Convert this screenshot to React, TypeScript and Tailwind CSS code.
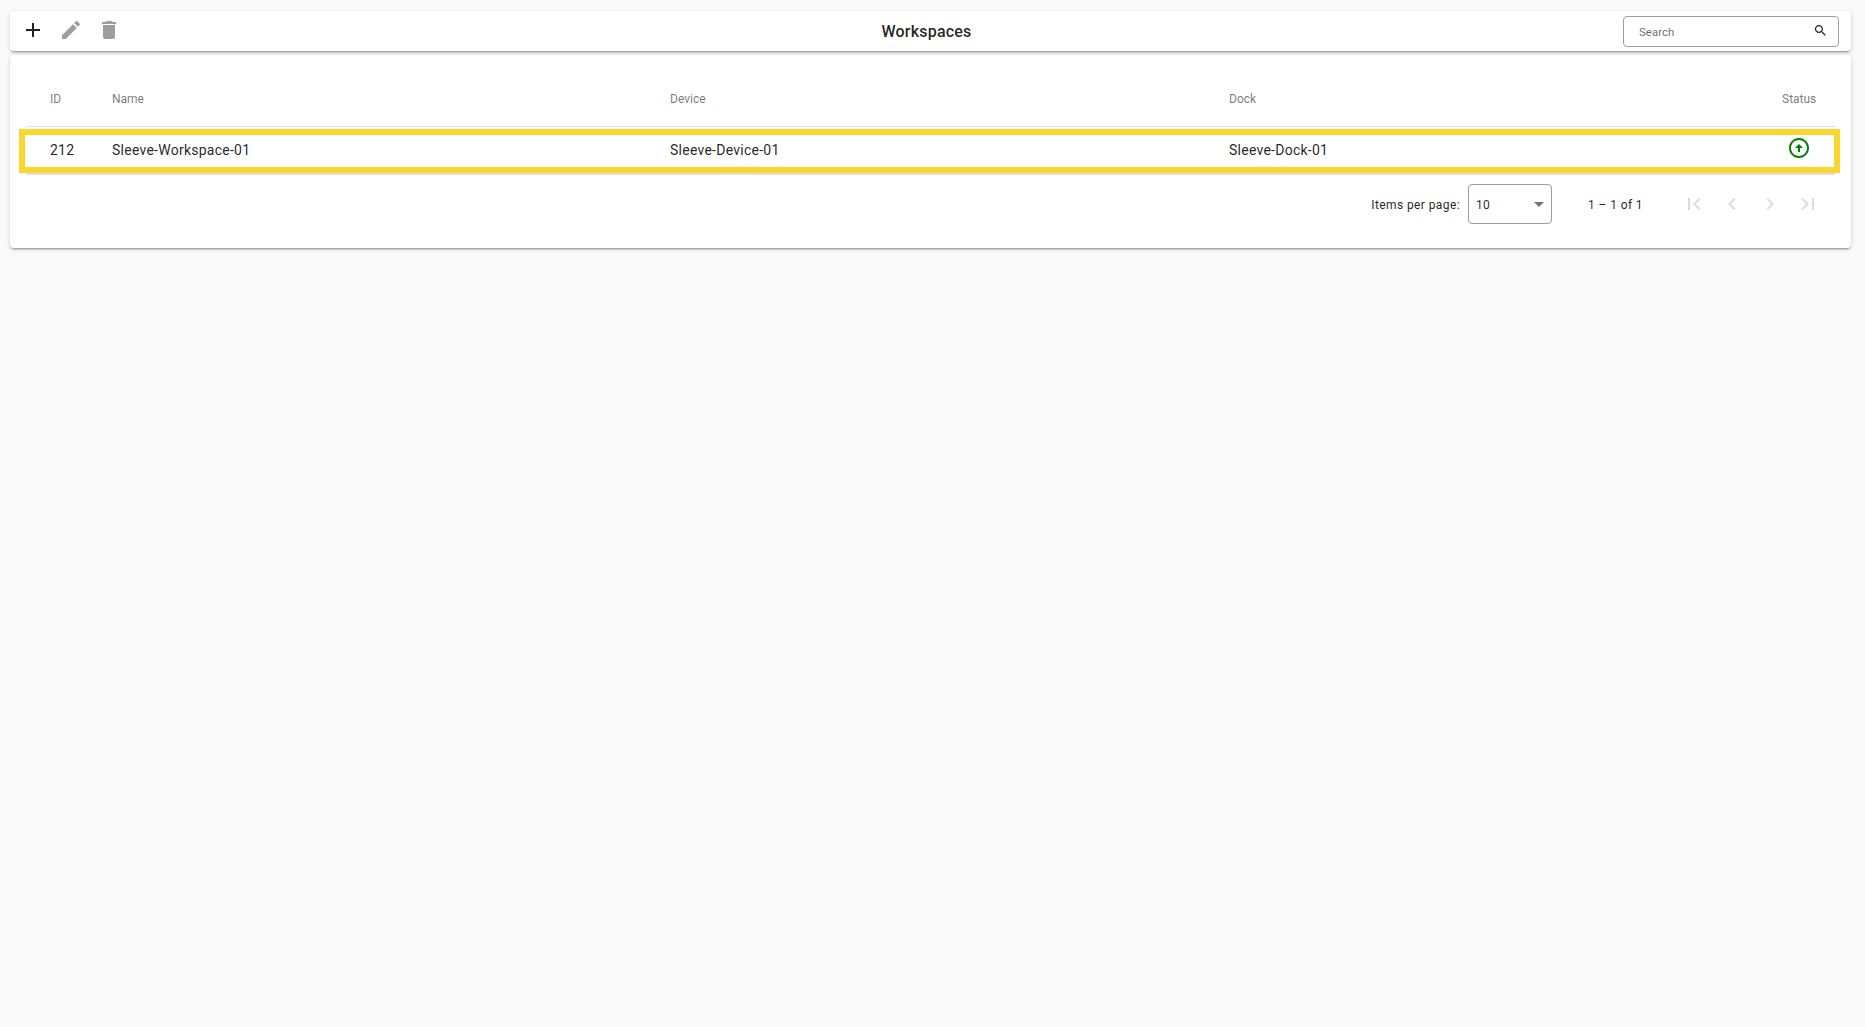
const font = "font-['Roboto',sans-serif]";
const cardShadow = "shadow-[0_3px_1px_-2px_rgba(0,0,0,0.2),0_2px_2px_0_rgba(0,0,0,0.14),0_1px_5px_0_rgba(0,0,0,0.12)]";

function Icon({ d, className, size = 24 }: { d: string; className?: string; size?: number }) {
  return (
    <svg width={size} height={size} viewBox="0 0 24 24" fill="currentColor" className={className}>
      <path d={d} />
    </svg>
  );
}

const icons = {
  add: "M19 13h-6v6h-2v-6H5v-2h6V5h2v6h6v2z",
  edit: "M3 17.25V21h3.75L17.81 9.94l-3.75-3.75L3 17.25zM20.71 7.04c.39-.39.39-1.02 0-1.41l-2.34-2.34c-.39-.39-1.02-.39-1.41 0l-1.83 1.83 3.75 3.75 1.83-1.83z",
  trash: "M6 19c0 1.1.9 2 2 2h8c1.1 0 2-.9 2-2V7H6v12zM19 4h-3.5l-1-1h-5l-1 1H5v2h14V4z",
  search: "M15.5 14h-.79l-.28-.27C15.41 12.59 16 11.11 16 9.5 16 5.91 13.09 3 9.5 3S3 5.91 3 9.5 5.91 16 9.5 16c1.61 0 3.09-.59 4.23-1.57l.27.28v.79l5 4.99L20.49 19l-4.99-5zm-6 0C7.01 14 5 11.99 5 9.5S7.01 5 9.5 5 14 7.01 14 9.5 11.99 14 9.5 14z",
  up: "M12 20c-4.41 0-8-3.59-8-8s3.59-8 8-8 8 3.59 8 8-3.59 8-8 8m0 2c5.52 0 10-4.48 10-10S17.52 2 12 2 2 6.48 2 12s4.48 10 10 10zm-1-10v4h2v-4h3l-4-4-4 4h3z",
  first: "M18.41 16.59L13.82 12l4.59-4.59L17 6l-6 6 6 6zM6 6h2v12H6z",
  prev: "M15.41 7.41L14 6l-6 6 6 6 1.41-1.41L10.83 12z",
  next: "M10 6L8.59 7.41 13.17 12l-4.58 4.59L10 18l6-6z",
  last: "M5.59 7.41L10.18 12l-4.59 4.59L7 18l6-6-6-6zM16 6h2v12h-2z",
};

const columns = "grid grid-cols-[86px_558px_559px_1fr_34px] items-center";

export default function App() {
  return (
    <div className={`min-h-screen bg-[#fafafa] pl-[10px] pr-[14px] pt-[11px] ${font}`}>
      {/* toolbar */}
      <div className={`flex h-[40px] items-center rounded-[4px] bg-white ${cardShadow}`}>
        <div className="flex w-[220px] gap-[14px] pl-[11px] pb-[3px]">
          <Icon d={icons.add} className="text-[rgba(0,0,0,0.87)]" />
          <Icon d={icons.edit} className="text-[rgba(0,0,0,0.38)]" />
          <Icon d={icons.trash} className="text-[rgba(0,0,0,0.38)]" />
        </div>
        <div className="flex-1 pt-[2px] text-center text-[16px] font-medium tracking-[0.2px] text-[rgba(0,0,0,0.87)]">Workspaces</div>
        <div className="mr-[12px] flex h-[31px] w-[216px] items-center justify-between rounded-[4px] border border-[#9e9e9e] pl-[15px] pr-[10px]">
          <span className="pt-[3px] text-[11.5px] text-[rgba(0,0,0,0.6)]">Search</span>
          <Icon d={icons.search} size={15} className="mb-[2px] text-[rgba(0,0,0,0.87)]" />
        </div>
      </div>

      {/* table card */}
      <div className={`mt-[4px] rounded-[4px] bg-white pl-[16px] pr-[16px] pb-[24px] ${cardShadow}`}>
        <div className={`${columns} h-[72px] border-b border-[#e0e0e0] pr-[19px] pt-[16px] text-[12px] text-[rgba(0,0,0,0.54)]`}>
          <span className="pl-[24px]">ID</span>
          <span>Name</span>
          <span>Device</span>
          <span>Dock</span>
          <span>Status</span>
        </div>
        <div className={`${columns} mt-[8px] -ml-px mr-px h-[32px] pl-px pr-[19px] pb-[2px] text-[14px] tracking-[0.25px] text-[rgba(0,0,0,0.87)] outline-6 outline-[#fad62e]`}>
          <span className="pl-[24px]">212</span>
          <span>Sleeve-Workspace-01</span>
          <span>Sleeve-Device-01</span>
          <span>Sleeve-Dock-01</span>
          <span className="flex justify-center pl-[2px] text-[#008000]">
            <Icon d={icons.up} className="mb-[4px]" />
          </span>
        </div>
        <div className="mt-[6px] h-[2px] bg-[#e0e0e0]" />

        <div className="mt-[9px] flex items-center justify-end pr-[15px] text-[12px] tracking-[0.4px] text-[rgba(0,0,0,0.87)]">
          <span className="pt-[2px]">Items per page:</span>
          <div className="ml-[8px] flex h-[40px] w-[84px] items-center justify-between rounded-[4px] border border-[#9e9e9e] pl-[7px] pr-[7px]">
            <span className="pt-[2px]">10</span>
            <span className="h-0 w-0 border-x-[5px] border-t-[5px] border-x-transparent border-t-[rgba(0,0,0,0.54)]" />
          </div>
          <span className="ml-[36px] pt-[2px]">1 – 1 of 1</span>
          <div className="ml-[39px] flex gap-[14px] text-[rgba(0,0,0,0.14)]">
            <Icon d={icons.first} />
            <Icon d={icons.prev} />
            <Icon d={icons.next} />
            <Icon d={icons.last} />
          </div>
        </div>
      </div>
    </div>
  );
}
